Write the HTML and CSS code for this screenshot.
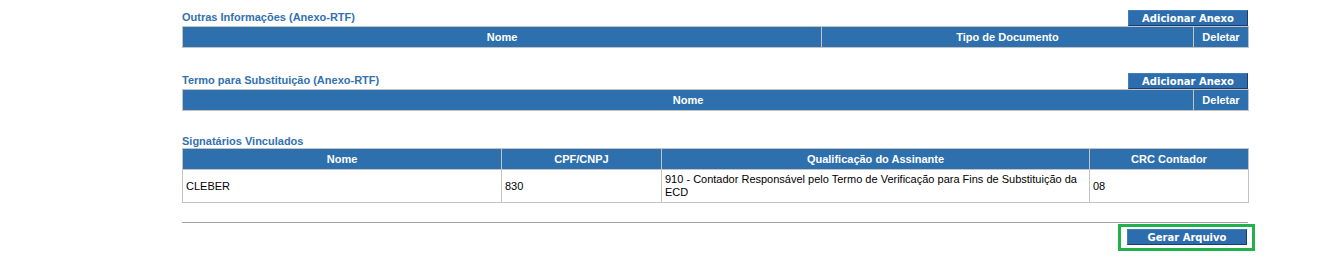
FILE: index.html
```html
<!DOCTYPE html>
<html lang="pt-BR">
<head>
<meta charset="utf-8">
<title>Anexos e Signatários</title>
<link rel="stylesheet" href="styles.css">
</head>
<body>
<div class="page">
  <section class="block">
    <div class="block-head">
      <span class="block-title">Outras Informações (Anexo-RTF)</span>
      <button class="btn" type="button">Adicionar Anexo</button>
    </div>
    <table class="grid">
      <colgroup><col class="c-639"><col class="c-372"><col class="c-55"></colgroup>
      <thead><tr><th>Nome</th><th>Tipo de Documento</th><th>Deletar</th></tr></thead>
    </table>
  </section>

  <section class="block block-2">
    <div class="block-head">
      <span class="block-title">Termo para Substituição (Anexo-RTF)</span>
      <button class="btn" type="button">Adicionar Anexo</button>
    </div>
    <table class="grid">
      <colgroup><col class="c-1011"><col class="c-55"></colgroup>
      <thead><tr><th>Nome</th><th>Deletar</th></tr></thead>
    </table>
  </section>

  <section class="block block-3">
    <div class="block-head-plain">
      <span class="block-title tight">Signatários Vinculados</span>
    </div>
    <table class="grid">
      <colgroup><col class="c-319"><col class="c-160"><col class="c-428"><col class="c-159"></colgroup>
      <thead><tr><th>Nome</th><th>CPF/CNPJ</th><th>Qualificação do Assinante</th><th>CRC Contador</th></tr></thead>
      <tbody>
        <tr>
          <td>CLEBER</td>
          <td>830</td>
          <td>910 - Contador Responsável pelo Termo de Verificação para Fins de Substituição da ECD</td>
          <td>08</td>
        </tr>
      </tbody>
    </table>
  </section>

  <div class="rule"></div>

  <div class="actions">
    <span class="highlight"><button class="btn" type="button">Gerar Arquivo</button></span>
  </div>
</div>
</body>
</html>
```

FILE: styles.css
```css
html, body {
  margin: 0;
  padding: 0;
  background: #ffffff;
}

body {
  font-family: "Liberation Sans", Arial, sans-serif;
  font-size: 11px;
  color: #000000;
}

.page {
  margin-left: 182px;
  width: 1066px;
  padding-top: 10px;
}

.block-2 {
  margin-top: 25px;
}

.block-3 {
  margin-top: 24px;
}

.block-head {
  display: flex;
  justify-content: space-between;
  align-items: flex-end;
  height: 16px;
}

.block-head-plain {
  display: flex;
  align-items: flex-end;
}

.block-title {
  font-family: "Liberation Sans", Arial, sans-serif;
  font-weight: bold;
  font-size: 11px;
  line-height: 14px;
  color: #3271b0;
  margin-bottom: 2px;
}

.block-title.tight {
  line-height: 13px;
  margin-bottom: 0;
}

.btn {
  box-sizing: border-box;
  width: 120px;
  height: 16px;
  margin: 0;
  padding: 0;
  font-family: "DejaVu Sans", Verdana, sans-serif;
  font-weight: bold;
  font-size: 10px;
  line-height: 13px;
  color: #ffffff;
  background: #2e6dad;
  border-top: 1px solid #3f7dbb;
  border-left: 1px solid #3f7dbb;
  border-right: 1px solid #1b3d68;
  border-bottom: 1px solid #1b3d68;
  text-align: center;
  cursor: pointer;
}

.grid {
  width: 1066px;
  table-layout: fixed;
  border-collapse: collapse;
  border: 1px solid #c3c3c3;
}

.c-639 { width: 639px; }
.c-372 { width: 372px; }
.c-55 { width: 55px; }
.c-1011 { width: 1011px; }
.c-319 { width: 319px; }
.c-160 { width: 160px; }
.c-428 { width: 428px; }
.c-159 { width: 159px; }

.grid th {
  height: 20px;
  padding: 0 2px;
  background: #2e6fad;
  color: #ffffff;
  font-family: "Liberation Sans", Arial, sans-serif;
  font-weight: bold;
  font-size: 11px;
  line-height: 20px;
  text-align: center;
  border: 1px solid #c3c3c3;
}

.grid td {
  padding: 3px 3px;
  font-family: "Liberation Sans", Arial, sans-serif;
  font-size: 11px;
  line-height: 13px;
  color: #000000;
  text-align: left;
  vertical-align: middle;
  border: 1px solid #c3c3c3;
  background: #ffffff;
}

.rule {
  margin-top: 19px;
  height: 0;
  border-top: 1px solid #a3a3a3;
}

.actions {
  display: flex;
  justify-content: flex-end;
}

.highlight {
  display: flex;
  margin-top: 1px;
  margin-right: -7px;
  padding: 2px 5px 3px 6px;
  border: 3px solid #22b14c;
}
```
